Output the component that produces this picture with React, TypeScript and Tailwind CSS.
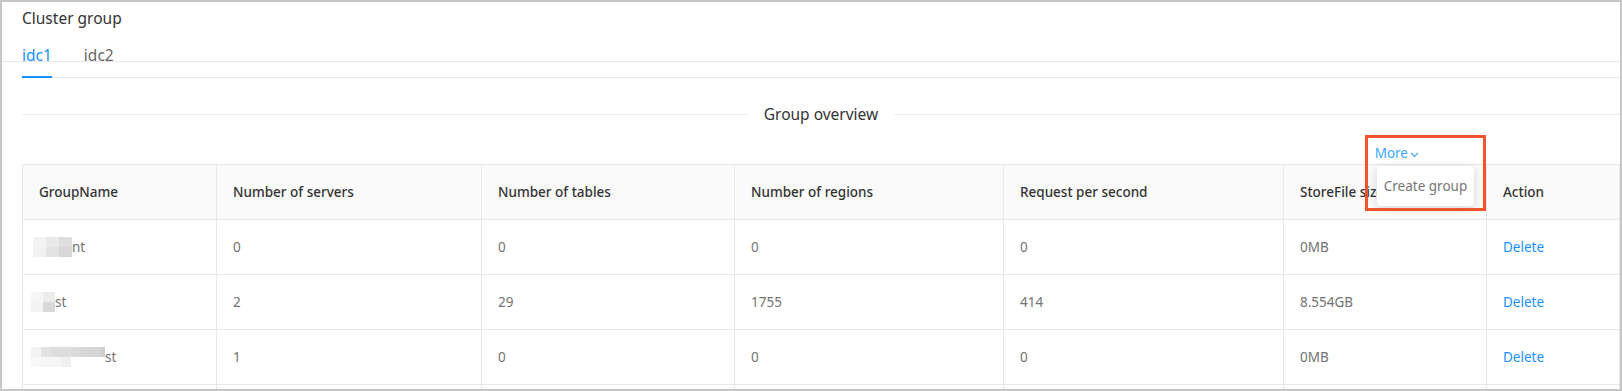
import type { ReactNode } from "react";

const COLS = "grid grid-cols-[194px_265px_253px_269px_280px_203px_133px]";

const HEAD = ["GroupName", "Number of servers", "Number of tables", "Number of regions", "Request per second", "StoreFile size", "Action"];

// pixelated (blurred) group names: each row of blocks is a list of full class strings
const MOSAICS: string[][][] = [
  [
    ["w-[13px] bg-[#f3f3f3]", "w-[13px] bg-[#e9e9e9]", "w-[13px] bg-[#dedede]"],
    ["w-[13px] bg-[#f1f1f1]", "w-[13px] bg-[#e3e3e3]", "w-[13px] bg-[#d7d7d7]"],
  ],
  [
    ["w-[12px] bg-[#f6f6f6]", "w-[12px] bg-[#ececec]"],
    ["w-[12px] bg-[#f3f3f3]", "w-[12px] bg-[#d9d9d9]"],
  ],
  [
    ["w-[10px] bg-[#f2f2f2]", "w-[10px] bg-[#e2e2e2]", "w-[10px] bg-[#dddddd]", "w-[10px] bg-[#dcdcdc]", "w-[10px] bg-[#dadada]", "w-[20px] bg-[#d6d6d6]", "w-[4px] bg-[#cfcfcf]"],
    ["w-[10px] bg-[#f8f8f8]", "w-[10px] bg-[#f5f5f5]", "w-[10px] bg-[#f6f6f6]", "w-[10px] bg-[#f0f0f0]"],
  ],
];

const ROWS = [
  { tail: "nt", shift: "-ml-[6px]", cells: ["0", "0", "0", "0", "0MB"] },
  { tail: "st", shift: "-ml-[8px]", cells: ["2", "29", "1755", "414", "8.554GB"] },
  { tail: "st", shift: "-ml-[8px]", cells: ["1", "0", "0", "0", "0MB"] },
];

function Cell({ children, head }: { children?: ReactNode; head?: boolean }) {
  return (
    <div
      className={`h-[55px] flex items-center px-4 border-r border-b border-[#e8e8e8] whitespace-nowrap overflow-hidden ${
        head ? "bg-[#fafafa] text-[#333] font-medium" : "text-[#737373]"
      }`}
    >
      {children}
    </div>
  );
}

function Mosaic({ blocks, shift }: { blocks: string[][]; shift: string }) {
  return (
    <div className={`flex flex-col ${shift}`}>
      {blocks.map((row, i) => (
        <div key={i} className="flex h-[10px]">
          {row.map((c, j) => (
            <span key={j} className={`h-full ${c}`} />
          ))}
        </div>
      ))}
    </div>
  );
}

export default function App() {
  return (
    <div className="w-[1622px] h-[391px] border-2 border-[#c6c6c6] bg-white overflow-hidden relative font-['Noto_Sans',sans-serif]">
      {/* stray line across the card head */}
      <div className="absolute top-[59px] left-0 right-0 h-px bg-[#e8e8e8]" />

      <div className="pl-5">
        <div className="pt-[4px] text-[15.5px] leading-6 text-[#333]">Cluster group</div>

        {/* tabs */}
        <div className="mt-[13px] flex gap-8 border-b border-[#e8e8e8] text-[15.5px] leading-6">
          <div className="relative pb-[10px] text-[#1890ff]">
            idc1
            <span className="absolute left-0 right-0 -bottom-px h-[2px] bg-[#1890ff]" />
          </div>
          <div className="pb-[10px] text-[#666]">idc2</div>
        </div>

        {/* divider */}
        <div className="mt-6 flex items-center">
          <div className="flex-1 h-px bg-[#efefef]" />
          <span className="px-4 text-[15.5px] leading-6 text-[#333]">Group overview</span>
          <div className="flex-1 h-px bg-[#efefef]" />
        </div>

        <div className="mt-4 flex justify-end pr-[201px]">
          <span className="flex items-center gap-[2px] text-[13.5px] leading-[22px] text-[#40a9ff]">
            More
            <svg width="9" height="6" viewBox="0 0 9 6" className="mt-[3px]">
              <path d="M1 1l3.5 3.5L8 1" fill="none" stroke="currentColor" strokeWidth="1.1" />
            </svg>
          </span>
        </div>

        {/* table */}
        <div className="border-l border-t border-[#e8e8e8] text-[13.5px]">
          <div className={COLS}>
            {HEAD.map((h) => (
              <Cell key={h} head>
                {h}
              </Cell>
            ))}
          </div>
          {ROWS.map((r, i) => (
            <div key={i} className={COLS}>
              <Cell>
                <Mosaic blocks={MOSAICS[i]} shift={r.shift} />
                <span>{r.tail}</span>
              </Cell>
              {r.cells.map((c, j) => (
                <Cell key={j}>{c}</Cell>
              ))}
              <Cell>
                <span className="text-[#1890ff]">Delete</span>
              </Cell>
            </div>
          ))}
          <div className={COLS}>
            {HEAD.map((h) => (
              <Cell key={h} />
            ))}
          </div>
        </div>
      </div>

      {/* dropdown menu */}
      <div className="absolute left-[1375px] top-[164px] w-[97px] h-[40px] rounded bg-white shadow-[0_2px_10px_rgba(0,0,0,0.15)] flex items-center justify-center text-[13.5px] text-[#777]">
        Create group
      </div>

      {/* annotation box */}
      <div className="absolute left-[1363px] top-[133px] w-[121px] h-[76px] border-[3px] border-[#f2542d]" />
    </div>
  );
}
